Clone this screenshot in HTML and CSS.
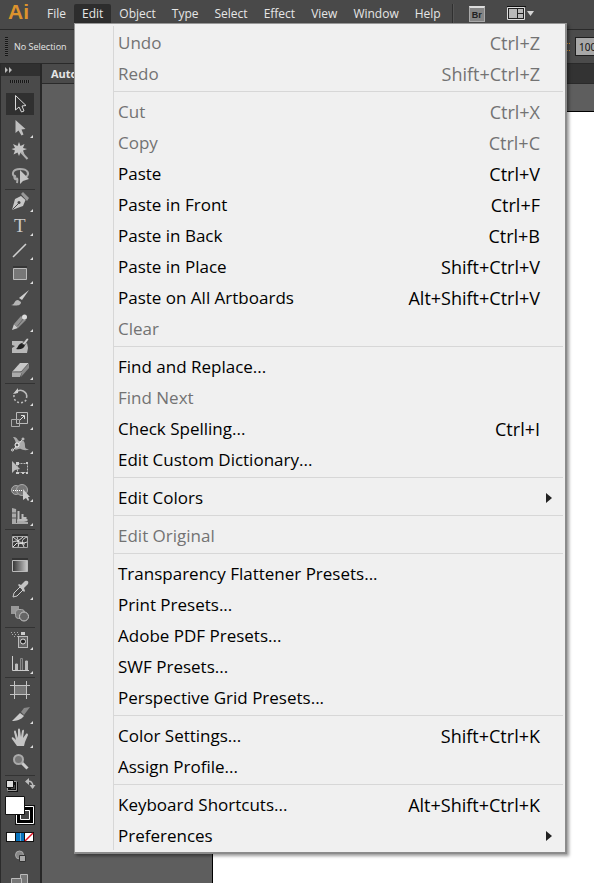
FILE: index.html
```html
<!DOCTYPE html>
<html lang="en">
<head>
<meta charset="utf-8">
<title>Illustrator</title>
<link rel="stylesheet" href="styles.css">
</head>
<body>
<div class="app">
  <header class="menubar">
    <span class="logo">Ai</span>
    <nav class="menus">
      <button>File</button>
      <div class="menu-host">
        <button class="open">Edit</button>
        <div class="menu" role="menu">
          <div class="group">
            <button class="item" disabled><span>Undo</span><kbd>Ctrl+Z</kbd></button>
            <button class="item" disabled><span>Redo</span><kbd>Shift+Ctrl+Z</kbd></button>
          </div>
          <div class="group">
            <button class="item" disabled><span>Cut</span><kbd>Ctrl+X</kbd></button>
            <button class="item" disabled><span>Copy</span><kbd>Ctrl+C</kbd></button>
            <button class="item"><span>Paste</span><kbd>Ctrl+V</kbd></button>
            <button class="item"><span>Paste in Front</span><kbd>Ctrl+F</kbd></button>
            <button class="item"><span>Paste in Back</span><kbd>Ctrl+B</kbd></button>
            <button class="item"><span>Paste in Place</span><kbd>Shift+Ctrl+V</kbd></button>
            <button class="item"><span>Paste on All Artboards</span><kbd>Alt+Shift+Ctrl+V</kbd></button>
            <button class="item" disabled><span>Clear</span></button>
          </div>
          <div class="group">
            <button class="item"><span>Find and Replace...</span></button>
            <button class="item" disabled><span>Find Next</span></button>
            <button class="item"><span>Check Spelling...</span><kbd>Ctrl+I</kbd></button>
            <button class="item"><span>Edit Custom Dictionary...</span></button>
          </div>
          <div class="group">
            <button class="item sub"><span>Edit Colors</span></button>
          </div>
          <div class="group">
            <button class="item" disabled><span>Edit Original</span></button>
          </div>
          <div class="group">
            <button class="item"><span>Transparency Flattener Presets...</span></button>
            <button class="item"><span>Print Presets...</span></button>
            <button class="item"><span>Adobe PDF Presets...</span></button>
            <button class="item"><span>SWF Presets...</span></button>
            <button class="item"><span>Perspective Grid Presets...</span></button>
          </div>
          <div class="group">
            <button class="item"><span>Color Settings...</span><kbd>Shift+Ctrl+K</kbd></button>
            <button class="item"><span>Assign Profile...</span></button>
          </div>
          <div class="group">
            <button class="item"><span>Keyboard Shortcuts...</span><kbd>Alt+Shift+Ctrl+K</kbd></button>
            <button class="item sub"><span>Preferences</span></button>
          </div>
        </div>
      </div>
      <button>Object</button>
      <button>Type</button>
      <button>Select</button>
      <button>Effect</button>
      <button>View</button>
      <button>Window</button>
      <button>Help</button>
    </nav>
    <span class="divider"></span>
    <button class="bridge">Br</button>
    <button class="arrange" aria-label="Arrange documents">
      <svg width="28" height="16" viewBox="0 0 28 16"><path d="M0 0h19v1H0z" fill="#111"/><path d="M.5 1.500h17v12H.5z" fill="#222" stroke="#ddd"/><path d="M2 3h8v9H2zM11 3h5v4h-5zM11 8h5v4h-5z" fill="#b9b9b9"/><path d="M20 5h7l-3.500 5z" fill="#d6d6d6"/></svg>
    </button>
  </header>

  <div class="controlbar">
    <span class="grip-v"></span>
    <span class="selection">No Selection</span>
    <span class="opacity-link"></span>
    <input class="opacity" value="100" aria-label="Opacity">
  </div>

  <div class="workspace">
    <aside class="tools">
      <button class="collapse" aria-label="Collapse tools"><svg width="40" height="12" viewBox="0 0 40 12"><path d="M4 3l3 3-3 3zM8 3l3 3-3 3z" fill="#bbb"/></svg></button>
      <div class="grip-h"></div>
      <div class="toolset">
        <button class="active" aria-label="Selection"><svg viewBox="0 0 40 24"><path d="M15.500 3.500v14.500l3.500-3 2.500 5 2.500-1-2-5 4-.5z" fill="#333" stroke="#d8d8d8"/></svg></button>
        <button class="more" aria-label="Direct selection"><svg viewBox="0 0 40 24"><path d="M15.500 4v13l3-2.500 3 5 2-1-2-5 4-.5z" fill="#c0c0c0"/></svg></button>
        <button aria-label="Magic wand"><svg viewBox="0 0 40 24"><path d="M19 2l1.500 4 4-2-1.500 4 4 1-4 1.500 1.500 4-4-2-1.500 3.500-1.500-3.500-4 2 1.500-4-3.500-1.500 3.500-1-2-4 4.500 2z" fill="#c4c4c4"/><path d="M21 12l6.500 7" stroke="#b0b0b0" stroke-width="2"/></svg></button>
        <button aria-label="Lasso"><svg viewBox="0 0 40 24"><path d="M16 13c-5-2-4-8 4-8s10 5 6 8M16 12c-3 1-1 4 0 3s2-1 1 4" fill="none" stroke="#aaa" stroke-width="2"/><path d="M20 6v14l3-3 6-2z" fill="#c4c4c4"/></svg></button>
      </div>
      <div class="toolset">
        <button class="more" aria-label="Pen"><svg viewBox="0 0 40 24"><path d="M12 20l3-11 6-3 4.500 4-2.500 6z" fill="#c8c8c8"/><path d="M21 4l2-2 6 6-2 3z" fill="#999"/><path d="M12.500 19.500l6-6" stroke="#444"/><circle cx="19" cy="12.500" r="1.500" fill="#444"/></svg></button>
        <button class="more" aria-label="Type"><svg viewBox="0 0 40 24"><text x="14" y="18" class="type-icon">T</text></svg></button>
        <button class="more" aria-label="Line segment"><svg viewBox="0 0 40 24"><path d="M13 19l13-13" stroke="#d0d0d0" stroke-width="1.500"/></svg></button>
        <button class="more" aria-label="Rectangle"><svg viewBox="0 0 40 24"><path d="M13 5h14" stroke="#222"/><path d="M13.500 6.500h13v11h-13z" fill="#777" stroke="#bbb"/></svg></button>
        <button aria-label="Paintbrush"><svg viewBox="0 0 40 24"><path d="M29 4l-7 10-3-2z" fill="#d0d0d0"/><path d="M11 19c4 0 3-5 7-5l3 2c0 4-5 4-10 3z" fill="#b5b5b5"/></svg></button>
        <button class="more" aria-label="Pencil"><svg viewBox="0 0 40 24"><path d="M12 20l2-6 4 4z" fill="#ccc"/><path d="M14 14l7-8 5 4-8 8z" fill="#909090"/><path d="M17.500 16l6.500-8" stroke="#666"/><circle cx="24.500" cy="7" r="2.500" fill="#ddd"/></svg></button>
        <button aria-label="Blob brush"><svg viewBox="0 0 40 24"><path d="M12 7h10l5 2 1 5-1 5H12v-5l3-2-3-1z" fill="#b8b8b8"/><path d="M16 15c2-1 2-5 6-6l3 2c-1 4-5 5-9 4z" fill="#222"/><path d="M22 10l5-6 2 1-4 6z" fill="#ccc" stroke="#2b2b2b" stroke-width=".5"/></svg></button>
        <button class="more" aria-label="Eraser"><svg viewBox="0 0 40 24"><path d="M12 14l8-9h9l-6 8z" fill="#c8c8c8"/><path d="M12 14l7-1 3 1-2 5h-8z" fill="#aaa"/><path d="M29 5v5l-8 9 1-6z" fill="#888"/><path d="M12 14h9l8-9" fill="none" stroke="#666"/></svg></button>
      </div>
      <div class="toolset">
        <button class="more" aria-label="Rotate"><svg viewBox="0 0 40 24"><path d="M15 9c5-6 13-1 11.500 5" fill="none" stroke="#bbb" stroke-width="1.500"/><path d="M14 11c-1 9 10 10 12.500 4" fill="none" stroke="#bbb" stroke-width="1.500" stroke-dasharray="2 2"/><path d="M18 4v5l-5 1z" fill="#ccc"/></svg></button>
        <button class="more" aria-label="Scale"><svg viewBox="0 0 40 24"><path d="M16.500 4.500h11v11h-11z" fill="#4c4c4c" stroke="#bbb"/><path d="M11.500 11.500h8v7h-8z" fill="none" stroke="#aaa"/><path d="M20 12l4-4M21 7.500h3.500V11" fill="none" stroke="#ddd"/></svg></button>
        <button class="more" aria-label="Width"><svg viewBox="0 0 40 24"><path d="M13 5c5-1 4 5 8 4 3-1 4 1 4 5 0 3 2 3 4 3-3 2-6 1-8 0-3-1-4 2-7 0 3-4 2-8-1-12z" fill="#aaa"/><path d="M13 18l10-11" stroke="#ddd"/><circle cx="17" cy="13" r="2" fill="#555" stroke="#fff"/><circle cx="12.500" cy="18" r="1" stroke="#ddd" fill="#444"/><circle cx="23" cy="7" r="1" stroke="#ddd" fill="#444"/></svg></button>
        <button aria-label="Free transform"><svg viewBox="0 0 40 24"><path d="M17.500 7.500h10v9h-10z" fill="none" stroke="#bbb" stroke-dasharray="2 1"/><path d="M16 6h3v3h-3zM26 6h2v2h-2zM26 16h2v2h-2zM16 16h3v2h-3zM22 16h2v2h-2z" fill="#ccc"/><path d="M12 5v12l3-3 5-1z" fill="#bbb"/></svg></button>
        <button class="more" aria-label="Shape builder"><svg viewBox="0 0 40 24"><circle cx="16" cy="10" r="4.500" fill="#777" stroke="#aaa"/><circle cx="22" cy="10" r="5.500" fill="#777" stroke="#aaa"/><path d="M13 10.500h11" stroke="#fff" stroke-dasharray="1 1"/><path d="M23 9v11l3-2 2 3 1-1-1-3h2z" fill="#ccc"/></svg></button>
        <button class="more" aria-label="Perspective grid"><svg viewBox="0 0 40 24"><path d="M12 4l4 1v10l12 3v2H12z" fill="#aaa"/><path d="M12 9h4M12 14h5M16.500 5v14" stroke="#555"/><path d="M18.500 7v9h9M22.500 10v4h4" fill="none" stroke="#bbb" stroke-width="2"/></svg></button>
      </div>
      <div class="toolset">
        <button aria-label="Mesh"><svg viewBox="0 0 40 24"><path d="M12 5h16" stroke="#1e1e1e"/><path d="M12.500 6.500h15v11h-15z" fill="#3b3b3b" stroke="#aaa"/><path d="M13 12c5-3 8 3 14 0M17 7c1 4 3 4 1 10M27 7c-5 2-6 4-3 10M13 7l5 4 5-4M13 17l4-4 8 1" fill="none" stroke="#e0e0e0"/></svg></button>
        <button aria-label="Gradient"><svg viewBox="0 0 40 24"><defs><linearGradient id="ramp"><stop stop-color="#333"/><stop offset="1" stop-color="#ccc"/></linearGradient></defs><path d="M12 5h16" stroke="#1e1e1e"/><path d="M12.500 6.500h15v11h-15z" fill="url(#ramp)" stroke="#bbb"/></svg></button>
        <button class="more" aria-label="Eyedropper"><svg viewBox="0 0 40 24"><path d="M13 19l1-4 6-6 3 3-6 6z" fill="#444" stroke="#ccc"/><path d="M18 7l1-1 2 1 4-4c3-1 4 1 3 3l-4 4 1 3-1 1z" fill="#c4c4c4"/></svg></button>
        <button aria-label="Blend"><svg viewBox="0 0 40 24"><path d="M11 4h8v8h-8z" fill="#999"/><rect x="15.500" y="7.500" width="9" height="9" rx="3" fill="#777" stroke="#aaa"/><circle cx="24" cy="14.500" r="4.500" fill="#666" stroke="#c8c8c8"/></svg></button>
      </div>
      <div class="toolset">
        <button class="more" aria-label="Symbol sprayer"><svg viewBox="0 0 40 24"><path d="M21 4h4v3h-4z" fill="#ccc"/><rect x="18.500" y="8.500" width="9" height="11" fill="#666" stroke="#bbb"/><circle cx="23" cy="13.500" r="2.500" fill="#222" stroke="#ddd"/><path d="M11 4.500h8M12 6.500h7M14 8.500h4" stroke="#aaa" stroke-dasharray="1 2"/></svg></button>
        <button class="more" aria-label="Column graph"><svg viewBox="0 0 40 24"><path d="M12.500 4v14.500H29" fill="none" stroke="#ccc"/><path d="M15.500 18v-6h2v6M25.500 18V9h2v9" fill="#bbb" stroke="#bbb"/><path d="M20.500 18V6.500h2V18" fill="#555" stroke="#888"/></svg></button>
      </div>
      <div class="toolset">
        <button aria-label="Artboard"><svg viewBox="0 0 40 24"><path d="M14.500 7.500h12v9h-12z" fill="#777"/><path d="M14.500 3v18M26.500 3v18M10 7.500h20M10 16.500h20" stroke="#c4c4c4"/></svg></button>
        <button class="more" aria-label="Slice"><svg viewBox="0 0 40 24"><path d="M12 19l8-8 4 3c-3 4-8 5-12 5z" fill="#ccc"/><path d="M21 10l3-4 6-1-6 8z" fill="#888"/></svg></button>
        <button class="more" aria-label="Hand"><svg viewBox="0 0 40 24"><path d="M17 20l-5-7c-1-2 1-2 2-1l2 2-2-8c0-2 2-2 2 0l2 6V4c0-2 2-2 2 0l1 7 1-6c1-2 2-1 2 0l-1 7 3-4c1-1 2 0 2 1l-3 7-1 4z" fill="#c4c4c4"/></svg></button>
        <button aria-label="Zoom"><svg viewBox="0 0 40 24"><path d="M22 13l5.500 5.500" stroke="#ccc" stroke-width="3"/><circle cx="18.500" cy="9.500" r="4.500" fill="#777" stroke="#aaa" stroke-width="2"/></svg></button>
      </div>
      <div class="toolset last">
        <svg class="swatches" viewBox="0 0 40 107">
          <path d="M9.500 7.500h7v7h-7z" fill="none" stroke="#111" stroke-width="3"/><path d="M7.500 5.500h9v9h-9z" fill="none" stroke="#999"/><path d="M6.500 4.500h7v7h-7z" fill="#ddd" stroke="#111"/>
          <path d="M27 5.500c4-1 6 1 6 6" fill="none" stroke="#bbb" stroke-width="1.500"/><path d="M25 5.500l4-3.500v7zM29.500 9h6l-3 4z" fill="#bbb"/>
          <path d="M15 29h20v20H15z" fill="#111"/><path d="M16.500 30.500h17v17h-17z" fill="#000" stroke="#fff"/><path d="M20.500 34.500h9v9h-9z" fill="#484848" stroke="#fff"/>
          <path d="M5.500 20.500h19v18h-19z" fill="#fff" stroke="#111"/>
          <path d="M6 56h28v10H6z" fill="#111"/><path d="M7 57h8v8H7zM25 57h8v8h-8z" fill="#fff"/><path d="M16 57h8v8h-8z" fill="#0874be"/><path d="M20.500 57v8" stroke="#75b7df"/><path d="M25 65l8-8" stroke="#e01020" stroke-width="1.500"/>
          <circle cx="19.500" cy="79" r="4" fill="#888" stroke="#aaa"/><path d="M19.500 79.500h6v6h-6z" fill="#aaa" stroke="#333"/>
          <path d="M20.500 98.500h7V108h-7z" fill="#777" stroke="#bbb"/><path d="M11.500 102.500h10v6h-10z" fill="#777" stroke="#bbb"/>
        </svg>
      </div>
    </aside>
    <main class="document">
      <div class="tabs"><span class="tab">Auto</span></div>
      <div class="pasteboard"><div class="artboard"></div></div>
    </main>
  </div>
</div>
</body>
</html>
```
FILE: styles.css
```css
* { box-sizing: border-box; }

body {
  margin: 0;
  background: #5e5e5e;
  font-family: "Open Sans", "Noto Sans", sans-serif;
  font-size: 12px;
  color: #e6e6e6;
}

button {
  margin: 0;
  padding: 0;
  border: 0;
  background: none;
  color: inherit;
  font: inherit;
  text-align: left;
}

svg { display: block; }

.app {
  display: flex;
  flex-direction: column;
  height: 100vh;
  overflow: hidden;
}

/* Menu bar */
.menubar {
  display: flex;
  align-items: flex-start;
  height: 29px;
  flex: none;
  padding: 4px 0 0 8px;
  background: #494949;
}

.logo {
  width: 31px;
  color: #dd932d;
  font: bold 21px/16px "Liberation Sans Narrow", "Liberation Sans", sans-serif;
}

.menus { display: flex; }

.menus button {
  height: 20px;
  padding: 0 8px;
  line-height: 20px;
}

.menu-host { position: relative; }

.menu-host > .open {
  border-radius: 2px 2px 0 0;
  background: #2d2d2d;
}

.divider {
  width: 2px;
  height: 20px;
  margin: 0 15px 0 3px;
  border-left: 1px solid #303030;
  border-right: 1px solid #555;
}

.bridge {
  width: 16px;
  height: 16px;
  margin-top: 2px;
  border: 1px solid #aaa;
  border-top: 2px solid #ddd;
  background: #858585;
  color: #222;
  font: bold 9px/12px "Liberation Sans", sans-serif;
  text-align: center;
}

.arrange { margin: 2px 0 0 22px; }

/* Drop-down menu */
.menu {
  position: absolute;
  top: 19px;
  left: 0;
  z-index: 2;
  width: 493px;
  padding: 3px 2px 1px;
  border: 1px solid #979797;
  border-right: 2px solid #8b8b8b;
  border-bottom: 2px solid #8b8b8b;
  background: linear-gradient(#d7d7d7, #d7d7d7) 38px 2px / 1px calc(100% - 4px) no-repeat #f0f0f0;
  box-shadow: 2px 2px 3px rgba(0, 0, 0, .4);
  color: #000;
}

.group + .group::before {
  content: "";
  display: block;
  height: 7px;
  margin-left: 37px;
  background: linear-gradient(#d7d7d7, #d7d7d7) 0 2px / 100% 1px no-repeat;
}

.menu .item {
  display: flex;
  justify-content: space-between;
  align-items: center;
  width: 100%;
  height: 31px;
  padding: 0 23px 0 41px;
  font-size: 17px;
  white-space: nowrap;
}

.menu .item:disabled { color: #737373; }

.item kbd {
  font-family: inherit;
  font-size: 18px;
}

.menu .sub { padding-right: 11px; }

.item.sub::after {
  content: "";
  border: 5px solid transparent;
  border-left: 6px solid #222;
  border-right: 0;
}

/* Control bar */
.controlbar {
  display: flex;
  align-items: center;
  flex: none;
  height: 35px;
  padding-left: 5px;
  border-top: 1px solid #2a2a2a;
  border-bottom: 1px solid #2a2a2a;
  background: #4b4b4b;
}

.grip-v {
  width: 3px;
  height: 19px;
  margin-right: 6px;
  background: repeating-linear-gradient(#171717 0 1px, #555 1px 2px);
}

.selection {
  flex: 1;
  font-size: 9px;
}

.opacity-link {
  width: 4px;
  height: 8px;
  margin-right: 5px;
  border-bottom: 1px dotted #dd932d;
  border-top: 1px dotted #dd932d;
}

.opacity {
  width: 19px;
  height: 19px;
  padding: 0 0 0 3px;
  border: 1px solid #1e1e1e;
  border-right: 0;
  background: #a8a8a8;
  color: #111;
  font: 10px "Noto Sans", sans-serif;
}

/* Workspace */
.workspace {
  display: flex;
  flex: 1;
  min-height: 0;
}

.tools {
  flex: none;
  width: 42px;
  overflow: hidden;
  border-left: 1px solid #2b2b2b;
  border-right: 2px solid #272727;
  background: #4a4a4a;
}

.collapse {
  display: block;
  width: 100%;
  height: 12px;
  background: #303030;
}

.grip-h {
  height: 3px;
  margin: 4px 10px 9px 9px;
  background: repeating-linear-gradient(90deg, #171717 0 1px, #555 1px 2px);
}

.toolset {
  padding-bottom: 2px;
  background: linear-gradient(#333, #333) 4px 100% / 30px 1px no-repeat;
}

.toolset.last { background: none; }

.toolset button {
  display: block;
  position: relative;
  width: 100%;
  height: 24px;
}

.toolset svg {
  width: 40px;
  height: 24px;
  margin-left: -1px;
}

.toolset .swatches { height: 107px; }

.toolset .active {
  background: linear-gradient(#303030, #303030) 5px 1px / 28px 22px no-repeat;
}

.toolset .more::after {
  content: "";
  position: absolute;
  right: 7px;
  bottom: 2px;
  border-left: 3px solid transparent;
  border-bottom: 3px solid #ddd;
}

.type-icon {
  fill: #ccc;
  font: 19px "Liberation Serif", serif;
}

.document {
  display: flex;
  flex: 1;
  flex-direction: column;
}

.tabs {
  display: flex;
  height: 20px;
  border-bottom: 1px solid #2a2a2a;
  background: #333;
}

.tab {
  padding: 0 40px 0 9px;
  background: #4a4a4a;
  font-size: 11px;
  font-weight: bold;
  line-height: 20px;
}

.pasteboard {
  display: flex;
  flex: 1;
  padding: 27px 0 0 170px;
  background: #5e5e5e;
}

.artboard {
  flex: 1;
  border-top: 1px solid #000;
  border-left: 1px solid #000;
  background: #fff;
}
```
